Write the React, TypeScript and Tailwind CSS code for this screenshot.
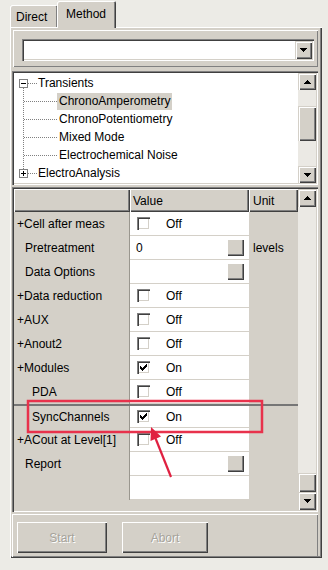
import React from "react";

function Tri({ up }: { up?: boolean }) {
  return (
    <svg width="7" height="4" viewBox="0 0 7 4" shapeRendering="crispEdges">
      {up ? (
        <g fill="#000">
          <rect x="3" y="0" width="1" height="1" />
          <rect x="2" y="1" width="3" height="1" />
          <rect x="1" y="2" width="5" height="1" />
          <rect x="0" y="3" width="7" height="1" />
        </g>
      ) : (
        <g fill="#000">
          <rect x="0" y="0" width="7" height="1" />
          <rect x="1" y="1" width="5" height="1" />
          <rect x="2" y="2" width="3" height="1" />
          <rect x="3" y="3" width="1" height="1" />
        </g>
      )}
    </svg>
  );
}

function ScrollBtn({ up, h = "h-[17px]" }: { up?: boolean; h?: string }) {
  return (
    <div
      className={`${h} shrink-0 bg-[#d4d0c8] shadow-[inset_1px_1px_0_#d4d0c8,inset_2px_2px_0_#ffffff,inset_-1px_-1px_0_#404040,inset_-2px_-2px_0_#808080] flex items-center justify-center`}
    >
      <Tri up={up} />
    </div>
  );
}

function Check({ on }: { on?: boolean }) {
  return (
    <div className="w-[13px] h-[13px] shrink-0 bg-white shadow-[inset_1px_1px_0_#808080,inset_2px_2px_0_#404040,inset_-1px_-1px_0_#ffffff,inset_-2px_-2px_0_#d4d0c8] flex items-center justify-center">
      {on && (
        <svg width="7" height="7" viewBox="0 0 7 7" shapeRendering="crispEdges">
          <g fill="#000">
            <rect x="6" y="0" width="1" height="3" />
            <rect x="5" y="1" width="1" height="3" />
            <rect x="4" y="2" width="1" height="3" />
            <rect x="3" y="3" width="1" height="3" />
            <rect x="2" y="4" width="1" height="3" />
            <rect x="1" y="3" width="1" height="3" />
            <rect x="0" y="2" width="1" height="3" />
          </g>
        </svg>
      )}
    </div>
  );
}

function SmallBtn() {
  return (
    <div className="w-[17px] h-[17px] bg-[#d4d0c8] shadow-[inset_1px_1px_0_#ffffff,inset_-1px_-1px_0_#404040,inset_-2px_-2px_0_#808080]" />
  );
}

type Row = {
  name: string;
  ind: number;
  kind: "check" | "btn" | "none";
  on?: boolean;
  value?: string;
  unit?: string;
  sel?: boolean;
};

const rows: Row[] = [
  { name: "+Cell after meas", ind: 0, kind: "check" },
  { name: "Pretreatment", ind: 1, kind: "btn", value: "0", unit: "levels" },
  { name: "Data Options", ind: 1, kind: "btn" },
  { name: "+Data reduction", ind: 0, kind: "check" },
  { name: "+AUX", ind: 0, kind: "check" },
  { name: "+Anout2", ind: 0, kind: "check" },
  { name: "+Modules", ind: 0, kind: "check", on: true },
  { name: "PDA", ind: 2, kind: "check" },
  { name: "SyncChannels", ind: 2, kind: "check", on: true, sel: true },
  { name: "+ACout at Level[1]", ind: 0, kind: "check" },
  { name: "Report", ind: 1, kind: "btn" },
  { name: "", ind: 0, kind: "none" },
];

const indents = ["pl-[3px]", "pl-[11px]", "pl-[18px]"];

function TreeLines() {
  return (
    <svg
      className="absolute left-0 top-0 pointer-events-none"
      width="284"
      height="112"
      viewBox="0 0 284 112"
      shapeRendering="crispEdges"
    >
      <g stroke="#808080" strokeWidth="1" strokeDasharray="1 1">
        <line x1="14" y1="10.5" x2="23" y2="10.5" />
        <line x1="9.5" y1="15" x2="9.5" y2="96" />
        <line x1="10" y1="28.5" x2="43" y2="28.5" />
        <line x1="10" y1="46.5" x2="43" y2="46.5" />
        <line x1="10" y1="64.5" x2="43" y2="64.5" />
        <line x1="10" y1="82.5" x2="43" y2="82.5" />
        <line x1="14" y1="100.5" x2="23" y2="100.5" />
      </g>
      <rect x="5.5" y="6.5" width="8" height="8" fill="#fff" stroke="#808080" />
      <line x1="7" y1="10.5" x2="12" y2="10.5" stroke="#000" />
      <rect x="5.5" y="96.5" width="8" height="8" fill="#fff" stroke="#808080" />
      <line x1="7" y1="100.5" x2="12" y2="100.5" stroke="#000" />
      <line x1="9.5" y1="98" x2="9.5" y2="103" stroke="#000" />
    </svg>
  );
}

export default function App() {
  return (
    <div className="relative w-[328px] h-[570px] overflow-hidden bg-[#ecebe6] pl-[10px] font-['Liberation_Sans',Arial,sans-serif] text-[12px] leading-none text-black">
      {/* Tabs */}
      <div className="flex items-end h-[27px]">
        <div className="w-[48px] h-[22px] bg-[#d4d0c8] rounded-t-[2px] shadow-[inset_1px_1px_0_#ffffff,inset_-1px_0_0_#404040,inset_-2px_0_0_#808080] flex items-center pl-[6px] pt-[1px]">
          Direct
        </div>
        <div className="relative z-10 -ml-[1px] -mb-[1px] w-[59px] h-[27px] bg-[#d4d0c8] rounded-t-[2px] shadow-[inset_1px_1px_0_#ffffff,inset_-1px_0_0_#404040,inset_-2px_0_0_#808080] flex items-start pl-[9px] pt-[7px]">
          Method
        </div>
      </div>

      {/* Tab page */}
      <div className="w-[312px] h-[531px] bg-[#d4d0c8] shadow-[inset_1px_1px_0_#ffffff,inset_-1px_-1px_0_#404040,inset_-2px_-2px_0_#808080] flex flex-col pl-[2px] pt-[3px]">
        {/* Combo frame */}
        <div className="ml-[1px] w-[305px] h-[37px] shadow-[inset_1px_1px_0_#ffffff,inset_-1px_-1px_0_#808080] pl-[9px] pt-[9px]">
          <div className="w-[292px] h-[22px] bg-white shadow-[inset_1px_1px_0_#808080,inset_2px_2px_0_#404040,inset_-1px_-1px_0_#ffffff,inset_-2px_-2px_0_#d4d0c8] p-[2px] flex justify-end">
            <div className="w-[17px]">
              <ScrollBtn h="h-[18px]" />
            </div>
          </div>
        </div>

        {/* Tree */}
        <div className="mt-[4px] w-[306px] h-[114px] bg-white shadow-[inset_1px_1px_0_#808080,inset_2px_2px_0_#404040,inset_-1px_-1px_0_#ffffff,inset_-2px_-2px_0_#d4d0c8] p-[2px] flex">
          <div className="relative flex-1 pt-[1px] overflow-hidden">
            <TreeLines />
            <div className="h-[18px] flex items-center pl-[24px]">Transients</div>
            <div className="h-[18px] flex items-center pl-[43px]">
              <span className="h-[17px] flex items-center px-[2px] bg-[#d4d0c8] whitespace-nowrap">ChronoAmperometry</span>
            </div>
            <div className="h-[18px] flex items-center pl-[45px] whitespace-nowrap">ChronoPotentiometry</div>
            <div className="h-[18px] flex items-center pl-[45px] whitespace-nowrap">Mixed Mode</div>
            <div className="h-[18px] flex items-center pl-[45px] whitespace-nowrap">Electrochemical Noise</div>
            <div className="h-[18px] flex items-center pl-[24px] whitespace-nowrap">ElectroAnalysis</div>
          </div>
          <div className="w-[18px] flex flex-col bg-[#ebe9e4]">
            <ScrollBtn up />
            <div className="h-[16px]" />
            <div className="h-[35px] bg-[#d4d0c8] shadow-[inset_1px_1px_0_#d4d0c8,inset_2px_2px_0_#ffffff,inset_-1px_-1px_0_#404040,inset_-2px_-2px_0_#808080]" />
            <div className="flex-1" />
            <ScrollBtn />
          </div>
        </div>

        {/* Property grid */}
        <div className="mt-[2px] w-[306px] h-[325px] bg-[#d4d0c8] shadow-[inset_1px_1px_0_#808080,inset_2px_2px_0_#404040,inset_-1px_-1px_0_#ffffff,inset_-2px_-2px_0_#d4d0c8] p-[2px] flex">
          <div className="flex-1 flex flex-col">
            <div className="h-[23px] flex">
              <div className="w-[116px] h-full shadow-[inset_1px_1px_0_#ffffff,inset_-1px_-1px_0_#404040,inset_-2px_-2px_0_#808080]" />
              <div className="w-[119px] h-full shadow-[inset_1px_1px_0_#ffffff,inset_-1px_-1px_0_#404040,inset_-2px_-2px_0_#808080] flex items-center pl-[3px]">
                Value
              </div>
              <div className="flex-1 h-full shadow-[inset_1px_1px_0_#ffffff,inset_-1px_-1px_0_#404040,inset_-2px_-2px_0_#808080] flex items-center pl-[4px]">
                Unit
              </div>
            </div>
            {rows.map((r, i) => (
              <div
                key={i}
                className={`h-[24px] flex ${r.sel ? "border-t-2 border-[#767676]" : ""}`}
              >
                <div
                  className={`w-[116px] h-full flex items-center ${indents[r.ind]} border-r border-[#9a978f] whitespace-nowrap overflow-hidden`}
                >
                  {r.name}
                </div>
                <div className="w-[119px] h-full bg-white border-b border-[#d4d0c8] flex items-center pl-[7px] pr-[5px]">
                  {r.kind === "check" && (
                    <>
                      <Check on={r.on} />
                      <span className="ml-[16px]">{r.on ? "On" : "Off"}</span>
                    </>
                  )}
                  {r.kind === "btn" && (
                    <>
                      <span className="flex-1 -ml-[1px]">{r.value ?? ""}</span>
                      <SmallBtn />
                    </>
                  )}
                </div>
                <div className="flex-1 h-full flex items-center pl-[4px]">{r.unit ?? ""}</div>
              </div>
            ))}
          </div>
          <div className="w-[18px] flex flex-col bg-[#ebe9e4]">
            <ScrollBtn up h="h-[18px]" />
            <div className="flex-1" />
            <div className="h-[19px] bg-[#d4d0c8] shadow-[inset_1px_1px_0_#d4d0c8,inset_2px_2px_0_#ffffff,inset_-1px_-1px_0_#404040,inset_-2px_-2px_0_#808080]" />
            <ScrollBtn h="h-[18px]" />
          </div>
        </div>

        {/* Buttons */}
        <div className="mt-[2px] w-[306px] h-[43px] shadow-[inset_1px_1px_0_#ffffff,inset_-1px_-1px_0_#808080] flex items-start pt-[8px] pl-[5px] gap-[15px]">
          <div className="w-[90px] h-[31px] shadow-[inset_1px_1px_0_#ffffff,inset_-1px_-1px_0_#404040,inset_-2px_-2px_0_#808080] flex items-center justify-center text-[#a6a39b] [text-shadow:1px_1px_0_#ffffff]">
            Start
          </div>
          <div className="w-[86px] h-[31px] shadow-[inset_1px_1px_0_#ffffff,inset_-1px_-1px_0_#404040,inset_-2px_-2px_0_#808080] flex items-center justify-center text-[#a6a39b] [text-shadow:1px_1px_0_#ffffff]">
            Abort
          </div>
        </div>
      </div>

      {/* Annotation overlay */}
      <svg
        className="absolute left-0 top-0 pointer-events-none"
        width="328"
        height="570"
        viewBox="0 0 328 570"
      >
        <rect x="28" y="401" width="234" height="31" fill="none" stroke="#e8324c" strokeWidth="2.5" />
        <line x1="171" y1="477" x2="155" y2="437" stroke="#e02040" strokeWidth="2.2" />
        <polygon points="151,427 150.5,441 161,436.5" fill="#e02040" />
      </svg>
    </div>
  );
}
